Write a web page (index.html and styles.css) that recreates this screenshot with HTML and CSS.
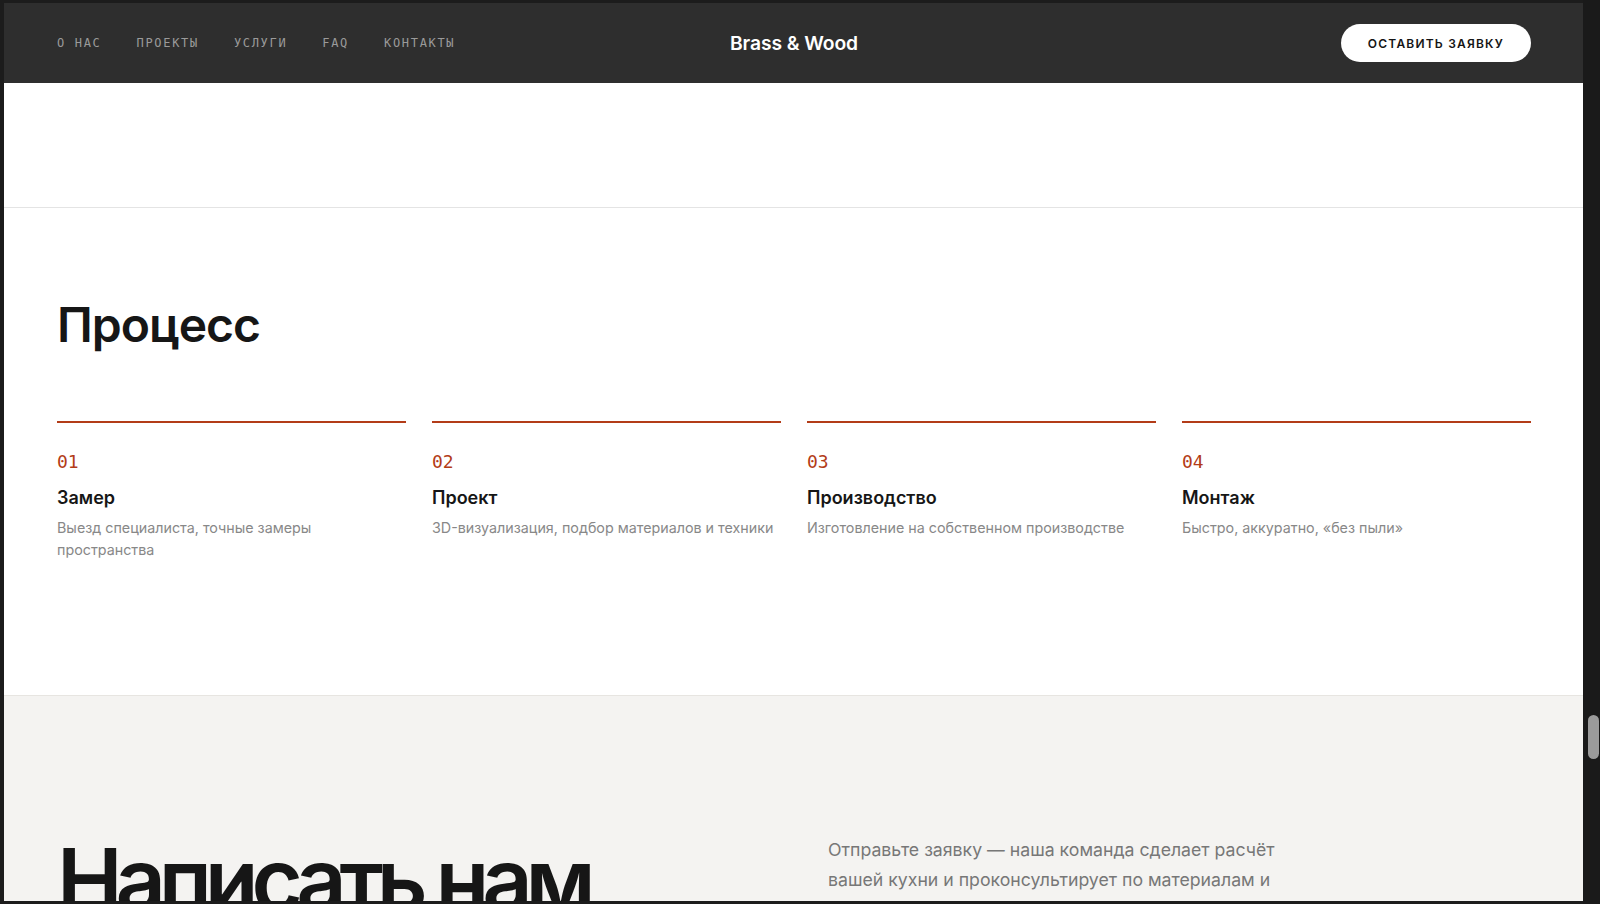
FILE: index.html
```html
<!DOCTYPE html>
<html lang="ru">
<head>
<meta charset="utf-8">
<title>Brass &amp; Wood — Процесс</title>
<link rel="stylesheet" href="styles.css">
</head>
<body>
<div class="frame">
  <div class="viewport">
    <header class="topbar">
      <nav class="nav">
        <a href="#about">О нас</a>
        <a href="#projects">Проекты</a>
        <a href="#services">Услуги</a>
        <a href="#faq">FAQ</a>
        <a href="#contacts">Контакты</a>
      </nav>
      <div class="logo">Brass &amp; Wood</div>
      <a class="cta" href="#contacts">Оставить заявку</a>
    </header>

    <div class="section-tail"></div>

    <section class="process">
      <h2 class="process-title">Процесс</h2>
      <ol class="steps">
        <li class="step">
          <span class="step-num">01</span>
          <h3 class="step-name">Замер</h3>
          <p class="step-text">Выезд специалиста, точные замеры пространства</p>
        </li>
        <li class="step">
          <span class="step-num">02</span>
          <h3 class="step-name">Проект</h3>
          <p class="step-text">3D-визуализация, подбор материалов и техники</p>
        </li>
        <li class="step">
          <span class="step-num">03</span>
          <h3 class="step-name">Производство</h3>
          <p class="step-text">Изготовление на собственном производстве</p>
        </li>
        <li class="step">
          <span class="step-num">04</span>
          <h3 class="step-name">Монтаж</h3>
          <p class="step-text">Быстро, аккуратно, «без пыли»</p>
        </li>
      </ol>
    </section>

    <section class="contact" id="contacts">
      <h2 class="contact-title">Написать нам</h2>
      <p class="contact-lead">Отправьте заявку — наша команда сделает расчёт вашей кухни и проконсультирует по материалам и срокам изготовления.</p>
    </section>
  </div>
  <div class="scrollbar"><div class="scroll-thumb"></div></div>
</div>
</body>
</html>
```

FILE: styles.css
```css
* {
  box-sizing: border-box;
}

html, body {
  margin: 0;
  padding: 0;
  height: 904px;
  overflow: hidden;
  background: #1c1c1c;
}

body {
  font-family: "Inter", "Noto Sans", sans-serif;
  color: #161616;
}

/* outer window chrome */
.frame {
  display: flex;
  height: 904px;
  padding: 3px 0 3px 4px;
}

.viewport {
  flex: 1;
  overflow: hidden;
  background: #ffffff;
  display: flex;
  flex-direction: column;
}

.scrollbar {
  width: 17px;
  flex: none;
  background: #1a1a1a;
  padding: 715px 1px 0 5px;
  margin-top: -3px;
  margin-bottom: -3px;
}

.scroll-thumb {
  width: 11px;
  height: 44px;
  border-radius: 6px;
  background: #9b9b9b;
}

/* top bar */
.topbar {
  flex: none;
  height: 80px;
  background: #2e2e2e;
  display: grid;
  grid-template-columns: 1fr auto 1fr;
  align-items: center;
  padding: 0 52px 0 53px;
}

.nav {
  display: flex;
  gap: 35px;
}

.nav a {
  font-family: "DejaVu Sans Mono", "Liberation Mono", monospace;
  font-size: 12px;
  letter-spacing: 0.14em;
  text-transform: uppercase;
  color: #9a9a9a;
  text-decoration: none;
}

.logo {
  font-size: 19.3px;
  font-weight: 600;
  color: #ffffff;
  letter-spacing: -0.005em;
}

.cta {
  justify-self: end;
  display: inline-flex;
  align-items: center;
  height: 38px;
  padding: 0 27px;
  border-radius: 19px;
  background: #ffffff;
  color: #151515;
  font-size: 12px;
  font-weight: 600;
  letter-spacing: 0.1em;
  text-transform: uppercase;
  text-decoration: none;
}

/* end of the previous block */
.section-tail {
  flex: none;
  height: 125px;
  border-bottom: 1px solid #e4e4e4;
}

/* process */
.process {
  flex: none;
  padding: 91px 52px 134px 53px;
}

.process-title {
  margin: 0;
  font-size: 48px;
  line-height: 1.1;
  font-weight: 600;
  letter-spacing: -0.02em;
  color: #161616;
}

.steps {
  list-style: none;
  margin: 69px 0 0;
  padding: 0;
  display: grid;
  grid-template-columns: repeat(4, 1fr);
  gap: 26px;
}

.step {
  border-top: 2px solid #b33c18;
  padding-top: 28px;
}

.step-num {
  display: block;
  font-family: "DejaVu Sans Mono", "Liberation Mono", monospace;
  font-size: 18px;
  line-height: 22px;
  color: #b33c18;
}

.step-name {
  margin: 14px 0 0;
  font-size: 18px;
  line-height: 22px;
  font-weight: 600;
  color: #161616;
}

.step-text {
  margin: 8px 0 0;
  font-size: 14.3px;
  line-height: 22px;
  color: #888888;
}

/* contact */
.contact {
  flex: 1;
  background: #f4f3f1;
  border-top: 1px solid #e7e5e1;
  padding: 140px 52px 0 53px;
  display: grid;
  grid-template-columns: 1fr 1fr;
  column-gap: 68px;
  align-items: start;
}

.contact-title {
  margin: 0;
  font-size: 88px;
  line-height: 1;
  font-weight: 600;
  letter-spacing: -0.082em;
  color: #161616;
}

.contact-lead {
  margin: -1px 0 0;
  max-width: 460px;
  font-size: 17.7px;
  line-height: 30px;
  color: #777777;
}
```
